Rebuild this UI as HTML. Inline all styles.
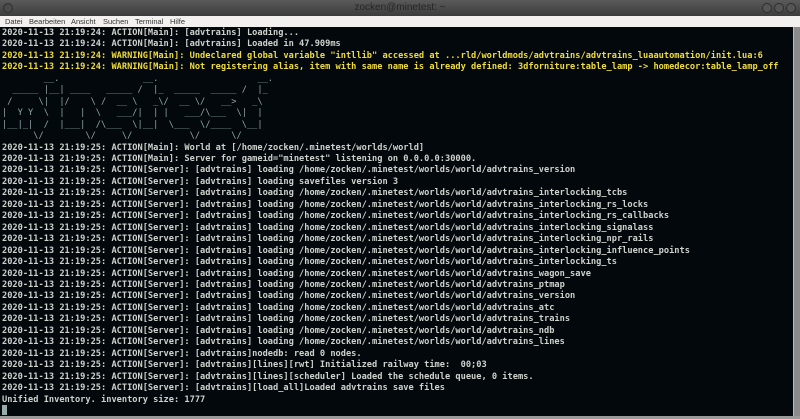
<!DOCTYPE html>
<html><head><meta charset="utf-8"><style>
*{margin:0;padding:0;box-sizing:border-box}
body{width:800px;height:419px;overflow:hidden;background:#02080c;position:relative;font-family:"Liberation Sans",sans-serif}
#title{position:absolute;left:0;top:0;width:800px;height:16px;background:linear-gradient(#5a5a5a,#3c3c3c);}
#title .t{position:absolute;left:0;width:800px;top:2px;text-align:center;font-size:10px;color:#262626}
#title .c{position:absolute;top:3px;width:10px;height:10px;border-radius:50%;background:#555;border:1px solid #2e2e2e}
#menu{position:absolute;left:0;top:16px;width:800px;height:11px;background:#f2f1ef;font-size:7.5px;color:#333;line-height:11px}
#menu span{position:absolute;top:0}
#term{position:absolute;left:0;top:27px;width:793px;height:390px;background:#02080c}
pre{position:absolute;left:2px;top:28px;font-family:"DejaVu Sans Mono",monospace;font-size:8.66px;line-height:11.45px;color:#cfd2cc;font-weight:bold;white-space:pre}
.y{color:#f0dc3c}.a{color:#93a9ad;font-weight:normal}
#sb{position:absolute;left:793px;top:27px;width:7px;height:392px;background:#8a8a8a;border-left:1px solid #bbb}
#bot{position:absolute;left:0;top:416px;width:800px;height:3px;background:#9a9a9a}
#cur{position:absolute;left:2px;top:405px;width:5px;height:10px;background:#9aa}
</style></head><body>
<div id="title"><div class="c" style="left:3px;background:#4a4a4a"></div><div class="t">zocken@minetest: ~</div>
<div class="c" style="left:762px"></div><div class="c" style="left:774px"></div><div class="c" style="left:786px"></div></div>
<div id="menu"><span style="left:5px">Datei</span><span style="left:29px">Bearbeiten</span><span style="left:71px">Ansicht</span><span style="left:103px">Suchen</span><span style="left:135px">Terminal</span><span style="left:170px">Hilfe</span></div>
<div id="term"></div>
<pre>2020-11-13 21:19:24: ACTION[Main]: [advtrains] Loading...
2020-11-13 21:19:24: ACTION[Main]: [advtrains] Loaded in 47.909ms
<span class="y">2020-11-13 21:19:24: WARNING[Main]: Undeclared global variable "intllib" accessed at ...rld/worldmods/advtrains/advtrains_luaautomation/init.lua:6</span>
<span class="y">2020-11-13 21:19:24: WARNING[Main]: Not registering alias, item with same name is already defined: 3dforniture:table_lamp -&gt; homedecor:table_lamp_off</span>
<span class="a">        __.                __.                   __.
  _____ |__| ____   _____ /  |_  _____  _____ /  |_
 /     \|  |/    \ /  __ \   _\/  __ \/   __>   _\
|  Y Y  \  |   |  \   ___/|  | |   ___/\___  \|  |
|__|_|  /  |___|  /\___  \|__|  \___  \/____  \__|
      \/        \/     \/           \/      \/</span>
2020-11-13 21:19:25: ACTION[Main]: World at [/home/zocken/.minetest/worlds/world]
2020-11-13 21:19:25: ACTION[Main]: Server for gameid="minetest" listening on 0.0.0.0:30000.
2020-11-13 21:19:25: ACTION[Server]: [advtrains] loading /home/zocken/.minetest/worlds/world/advtrains_version
2020-11-13 21:19:25: ACTION[Server]: [advtrains] loading savefiles version 3
2020-11-13 21:19:25: ACTION[Server]: [advtrains] loading /home/zocken/.minetest/worlds/world/advtrains_interlocking_tcbs
2020-11-13 21:19:25: ACTION[Server]: [advtrains] loading /home/zocken/.minetest/worlds/world/advtrains_interlocking_rs_locks
2020-11-13 21:19:25: ACTION[Server]: [advtrains] loading /home/zocken/.minetest/worlds/world/advtrains_interlocking_rs_callbacks
2020-11-13 21:19:25: ACTION[Server]: [advtrains] loading /home/zocken/.minetest/worlds/world/advtrains_interlocking_signalass
2020-11-13 21:19:25: ACTION[Server]: [advtrains] loading /home/zocken/.minetest/worlds/world/advtrains_interlocking_npr_rails
2020-11-13 21:19:25: ACTION[Server]: [advtrains] loading /home/zocken/.minetest/worlds/world/advtrains_interlocking_influence_points
2020-11-13 21:19:25: ACTION[Server]: [advtrains] loading /home/zocken/.minetest/worlds/world/advtrains_interlocking_ts
2020-11-13 21:19:25: ACTION[Server]: [advtrains] loading /home/zocken/.minetest/worlds/world/advtrains_wagon_save
2020-11-13 21:19:25: ACTION[Server]: [advtrains] loading /home/zocken/.minetest/worlds/world/advtrains_ptmap
2020-11-13 21:19:25: ACTION[Server]: [advtrains] loading /home/zocken/.minetest/worlds/world/advtrains_version
2020-11-13 21:19:25: ACTION[Server]: [advtrains] loading /home/zocken/.minetest/worlds/world/advtrains_atc
2020-11-13 21:19:25: ACTION[Server]: [advtrains] loading /home/zocken/.minetest/worlds/world/advtrains_trains
2020-11-13 21:19:25: ACTION[Server]: [advtrains] loading /home/zocken/.minetest/worlds/world/advtrains_ndb
2020-11-13 21:19:25: ACTION[Server]: [advtrains] loading /home/zocken/.minetest/worlds/world/advtrains_lines
2020-11-13 21:19:25: ACTION[Server]: [advtrains]nodedb: read 0 nodes.
2020-11-13 21:19:25: ACTION[Server]: [advtrains][lines][rwt] Initialized railway time:  00;03
2020-11-13 21:19:25: ACTION[Server]: [advtrains][lines][scheduler] Loaded the schedule queue, 0 items.
2020-11-13 21:19:25: ACTION[Server]: [advtrains][load_all]Loaded advtrains save files
Unified Inventory. inventory size: 1777</pre>
<div id="cur"></div>
<div id="sb"></div>
<div id="bot"></div>
</body></html>
